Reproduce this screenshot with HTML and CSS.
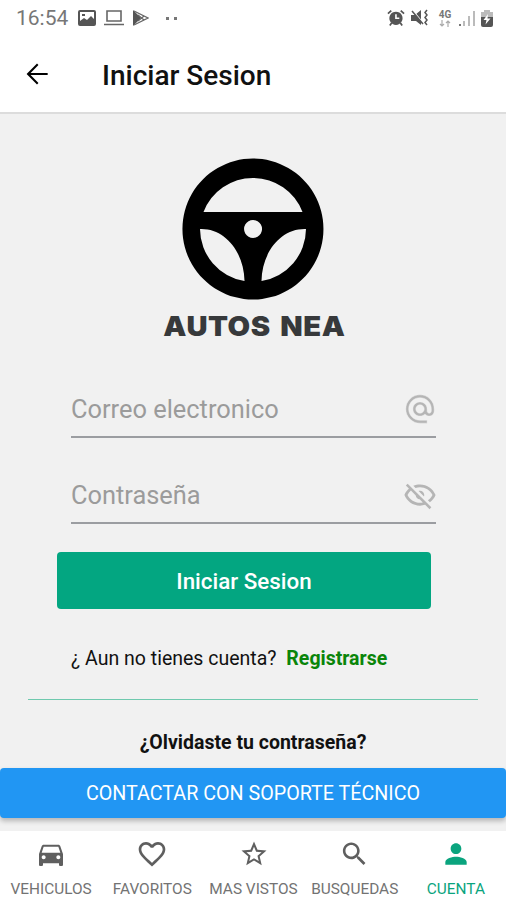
FILE: index.html
```html
<!DOCTYPE html>
<html lang="es">
<head>
  <meta charset="UTF-8" />
  <meta name="viewport" content="width=device-width, initial-scale=1.0"/>
  <title>Autos NEA - Iniciar Sesion</title>
  <link rel="stylesheet" href="styles.css">
</head>
<body>
  <div class="status">
    <span class="hora">16:54</span>
    <svg class="st-imagen" width="18" height="16" viewBox="0 0 18 16"><path fill-rule="evenodd" d="M2 0H16Q18 0 18 2V14Q18 16 16 16H2Q0 16 0 14V2Q0 0 2 0M2 2V11L6 8L9 10L13 6L16 9V2ZM4 4H7V6H4Z"/></svg>
    <svg class="st-laptop" width="20" height="16" viewBox="0 0 20 16"><path fill="none" stroke="#666" stroke-width="1.6" d="M3 1H17V11H3ZM0 14.5H20"/></svg>
    <svg class="st-play" width="16" height="16" viewBox="0 0 16 16"><path d="M0 0L8 8L0 16Z"/><path fill="none" stroke="#666" stroke-width="1.3" d="M1 1L15 8L1 15M5 11L11 6M5 5L11 10"/></svg>
    <span class="puntos"><i></i><i></i></span>
    <div class="status-der">
      <svg width="18" height="18" viewBox="0 0 19 18"><path fill-rule="evenodd" d="M9.5 2.3A7 7 0 1 1 9.4 2.3M8.6 5V10H13V8.6H10.3V5Z"/><path fill="none" stroke="#555" stroke-width="1.8" d="M1 4.5L4.5 1.2M14.5 1.2L18 4.5M5 14L3 17M14 14L16 17"/></svg>
      <svg width="18" height="18" viewBox="0 0 18 18"><path d="M0 6H4L10 1V16L5 12H0Z"/><path fill="none" stroke="#fff" stroke-width="1.2" d="M1 .5L12 14"/><path fill="none" stroke="#555" stroke-width="1.5" d="M1 2L12 15"/><path fill="none" stroke="#555" stroke-width="1.5" d="M16 1L14 3.5L16 6L14 8.5L16 11L14 13.5L16 16"/></svg>
      <span class="red"><b>4G</b><svg width="12" height="7" viewBox="0 0 12 7"><path fill="none" stroke="#aaa" stroke-width="1.2" d="M3 0V6M1 4L3 6L5 4M9 7V1M7 3L9 1L11 3"/></svg></span>
      <svg width="16" height="17" viewBox="0 0 16 17"><path fill="#777" d="M0 14H2V16H0Z"/><path fill="#bbb" d="M4 11H6V16H4ZM9 6H11V16H9ZM14 1H16V16H14Z"/></svg>
      <svg width="12" height="17" viewBox="0 0 12 17"><path fill="#bbb" d="M3 0H9V2H12V8H0V2H3Z"/><path d="M0 7H12V15Q12 17 10 17H2Q0 17 0 15Z"/><path fill="#fff" d="M7 4L2.5 10H5.5L4.5 14.5L9.5 8.5H6.5Z"/></svg>
    </div>
  </div>

  <header class="barra">
    <svg class="volver" width="32" height="32" viewBox="0 0 24 24"><path d="M20 11.2V12.8H7.2L13.1 18.7L12 19.8L4.200 12L12 4.200L13.100 5.300L7.200 11.200H20Z"/></svg>
    <h1>Iniciar Sesion</h1>
  </header>

  <main>
    <div class="logo">
      <svg width="142" height="142" viewBox="0 0 142 142"><path fill-rule="evenodd" d="M71 .5A70.5 70.5 0 1 1 70.9 .5ZM21.5 54H120.5A53 53 0 0 0 21.5 54ZM18 71A53 53 0 0 0 62.5 123C62 94 43 70 18 71ZM124 71A53 53 0 0 1 79.5 123C80 94 99 70 124 71ZM71 62A9 9 0 1 0 71.1 62Z"/></svg>
      <div class="marca">AUTOS NEA</div>
    </div>

    <form>
      <div class="campo">
        <input type="email" placeholder="Correo electronico" />
        <svg class="arroba" width="34" height="34" viewBox="0 0 24 24"><path d="M12,15C12.81,15 13.5,14.7 14.11,14.11C14.7,13.5 15,12.81 15,12C15,11.19 14.7,10.5 14.11,9.89C13.5,9.3 12.81,9 12,9C11.19,9 10.5,9.3 9.89,9.89C9.3,10.5 9,11.19 9,12C9,12.81 9.3,13.5 9.89,14.11C10.5,14.7 11.19,15 12,15M12,2C14.75,2 17.1,3 19.05,4.95C21,6.9 22,9.25 22,12V13.45C22,14.45 21.65,15.3 21,16C20.3,16.67 19.5,17 18.5,17C17.3,17 16.31,16.5 15.56,15.5C14.56,16.5 13.38,17 12,17C10.63,17 9.45,16.5 8.46,15.54C7.5,14.55 7,13.38 7,12C7,10.63 7.5,9.45 8.46,8.46C9.45,7.5 10.63,7 12,7C13.37,7 14.55,7.5 15.54,8.46C16.5,9.45 17,10.63 17,12V13.45C17,13.86 17.16,14.22 17.46,14.53C17.76,14.84 18.11,15 18.5,15C18.92,15 19.27,14.84 19.57,14.53C19.87,14.22 20,13.86 20,13.45V12C20,9.81 19.23,7.93 17.65,6.35C16.07,4.77 14.19,4 12,4C9.81,4 7.93,4.77 6.35,6.35C4.77,7.93 4,9.81 4,12C4,14.19 4.77,16.07 6.35,17.65C7.93,19.23 9.81,20 12,20H17V22H12C9.25,22 6.9,21 4.95,19.05C3,17.1 2,14.75 2,12C2,9.25 3,6.9 4.95,4.95C6.9,3 9.25,2 12,2Z"/></svg>
      </div>
      <div class="campo">
        <input type="password" placeholder="Contraseña" />
        <svg width="34" height="34" viewBox="0 0 24 24"><path d="M2,5.27L3.28,4L20,20.72L18.73,22L15.65,18.92C14.5,19.3 13.28,19.5 12,19.5C7,19.5 2.73,16.39 1,12C1.69,10.24 2.79,8.69 4.19,7.46L2,5.27M12,9A3,3 0 0,1 15,12C15,12.35 14.94,12.69 14.83,13L11,9.17C11.31,9.06 11.65,9 12,9M12,4.5C17,4.5 21.27,7.61 23,12C22.18,14.08 20.79,15.88 19,17.19L17.58,15.76C18.94,14.82 20.06,13.54 20.82,12C19.17,8.64 15.76,6.5 12,6.5C10.91,6.5 9.84,6.68 8.84,7L7.3,5.47C8.74,4.85 10.33,4.5 12,4.5M3.18,12C4.83,15.36 8.24,17.5 12,17.5C12.69,17.5 13.37,17.43 14,17.29L11.72,15C10.29,14.85 9.15,13.71 9,12.28L5.6,8.87C4.61,9.72 3.78,10.78 3.18,12Z"/></svg>
      </div>
      <button type="button" class="entrar">Iniciar Sesion</button>
    </form>

    <p class="registro">¿ Aun no tienes cuenta? <a>Registrarse</a></p>
    <div class="linea"></div>
    <p class="olvido">¿Olvidaste tu contraseña?</p>
    <button type="button" class="soporte">CONTACTAR CON SOPORTE TÉCNICO</button>
  </main>

  <nav>
    <a>
      <svg width="32" height="32" viewBox="0 0 24 24"><path d="M18.92 6.01C18.72 5.42 18.16 5 17.5 5h-11c-.66 0-1.21.42-1.42 1.01L3 12v8c0 .55.45 1 1 1h1c.55 0 1-.45 1-1v-1h12v1c0 .55.45 1 1 1h1c.55 0 1-.45 1-1v-8l-2.08-5.99zM6.5 16c-.83 0-1.5-.67-1.5-1.5S5.67 13 6.5 13s1.5.67 1.5 1.5S7.33 16 6.5 16zm11 0c-.83 0-1.5-.67-1.5-1.5s.67-1.5 1.5-1.5 1.5.67 1.5 1.5-.67 1.5-1.5 1.5zM5 11l1.5-4.5h11L19 11H5z"/></svg>
      <span>VEHICULOS</span>
    </a>
    <a>
      <svg width="32" height="32" viewBox="0 0 24 24"><path d="M16.5 3c-1.74 0-3.41.81-4.5 2.09C10.91 3.81 9.24 3 7.5 3 4.42 3 2 5.42 2 8.5c0 3.78 3.4 6.86 8.55 11.54L12 21.35l1.45-1.32C18.6 15.36 22 12.28 22 8.5 22 5.42 19.58 3 16.5 3zm-4.4 15.55l-.1.1-.1-.1C7.14 14.24 4 11.39 4 8.5 4 6.5 5.5 5 7.5 5c1.54 0 3.04.99 3.57 2.36h1.87C13.46 5.99 14.96 5 16.5 5c2 0 3.5 1.5 3.5 3.5 0 2.89-3.14 5.74-7.9 10.05z"/></svg>
      <span>FAVORITOS</span>
    </a>
    <a>
      <svg width="30" height="32" viewBox="0 0 24 24"><path d="M22 9.24l-7.19-.62L12 2 9.19 8.63 2 9.24l5.46 4.73L5.82 21 12 17.27 18.18 21l-1.63-7.03L22 9.24zM12 15.4l-3.76 2.27 1-4.28-3.32-2.88 4.38-.38L12 6.1l1.71 4.04 4.38.38-3.32 2.88 1 4.28L12 15.4z"/></svg>
      <span>MAS VISTOS</span>
    </a>
    <a>
      <svg width="31" height="32" viewBox="0 0 24 24"><path d="M15.5 14h-.79l-.28-.27C15.41 12.59 16 11.11 16 9.5 16 5.91 13.09 3 9.5 3S3 5.91 3 9.5 5.91 16 9.5 16c1.61 0 3.09-.59 4.23-1.57l.27.28v.79l5 4.99L20.49 19l-4.99-5zm-6 0C7.01 14 5 11.99 5 9.5S7.01 5 9.5 5 14 7.01 14 9.5 11.99 14 9.5 14z"/></svg>
      <span>BUSQUEDAS</span>
    </a>
    <a class="activo">
      <svg width="32" height="32" viewBox="0 0 24 24"><path d="M12 12c2.21 0 4-1.79 4-4s-1.79-4-4-4-4 1.79-4 4 1.79 4 4 4zm0 2c-2.67 0-8 1.34-8 4v2h16v-2c0-2.66-5.33-4-8-4z"/></svg>
      <span>CUENTA</span>
    </a>
  </nav>
</body>
</html>
```

FILE: styles.css
```css
* { box-sizing:border-box; }
body { margin:0; height:900px; display:flex; flex-direction:column; overflow:hidden; background:#f1f1f1; font-family:Roboto, "Liberation Sans", sans-serif; color:#111; }
svg { display:block; flex:none; }
p, h1 { margin:0; }
input, button { font-family:inherit; border:none; padding:0; }

.status { height:36px; flex:none; display:flex; align-items:center; padding:0 13px 0 16px; background:#fff; fill:#555; }
.hora { width:62px; font-size:21px; color:#777; }
.st-laptop { margin-left:8px; }
.st-play { margin-left:9px; }
.puntos { display:flex; gap:5px; margin-left:17px; }
.puntos i { width:3px; height:3px; background:#777; }
.status-der { display:flex; align-items:center; gap:6px; margin-left:auto; }
.red { width:16px; margin-left:2px; display:flex; flex-direction:column; align-items:center; font-size:10px; line-height:10px; color:#777; }

.barra { height:78px; flex:none; display:flex; align-items:center; padding:0 21px; background:#fff; border-bottom:2px solid #dcdcdc; }
.barra h1 { margin:3px 0 0 49px; font-size:28px; font-weight:500; line-height:32px; }

main { flex:1; display:flex; flex-direction:column; }
.logo { display:flex; flex-direction:column; align-items:center; padding-top:44px; }
.marca { margin:10px 0 0 2px; font-family:Inter, sans-serif; font-size:27px; font-weight:900; line-height:34px; letter-spacing:.5px; word-spacing:3px; color:#37393b; transform:scaleX(1.08); }

form { padding:0 57px; margin-top:38px; }
.campo { height:56px; margin:0 13px 30px 14px; display:flex; align-items:center; border-bottom:2px solid #9b9da1; fill:#b5b5b5; }
.campo input { flex:1; min-width:0; background:none; outline:none; font-size:25.4px; }
.campo input::placeholder { color:#9b9b9b; opacity:1; }
.campo svg { margin-right:-1px; }
.arroba { stroke:#f1f1f1; stroke-width:.3; }
.entrar { display:block; width:374px; height:57px; margin-top:-2px; border-radius:4px; background:#03a681; color:#fff; font-size:22.4px; font-weight:500; }

.registro { margin:38px 0 0 71px; font-size:19.5px; line-height:24px; }
.registro a { margin-left:5px; color:#0a850a; font-weight:700; }
.linea { width:450px; height:1px; flex:none; margin:28px 0 31px 28px; background:#6fc9ae; }
.olvido { text-align:center; font-size:19.5px; font-weight:700; line-height:24px; }
.soporte { height:50px; margin-top:13px; border-radius:4px; background:#2196f3; color:#fff; font-size:19.7px; box-shadow:0 3px 5px rgba(0,0,0,.25); }

nav { height:69px; flex:none; display:flex; background:#fff; }
nav a { flex:1; display:flex; flex-direction:column; align-items:center; padding:7px 0 0 1px; font-size:15.4px; line-height:20px; color:#737373; fill:#5f5f5f; white-space:nowrap; }
nav span { margin-top:9px; }
nav .activo { color:#0aa47e; fill:#0aa47e; }
```
